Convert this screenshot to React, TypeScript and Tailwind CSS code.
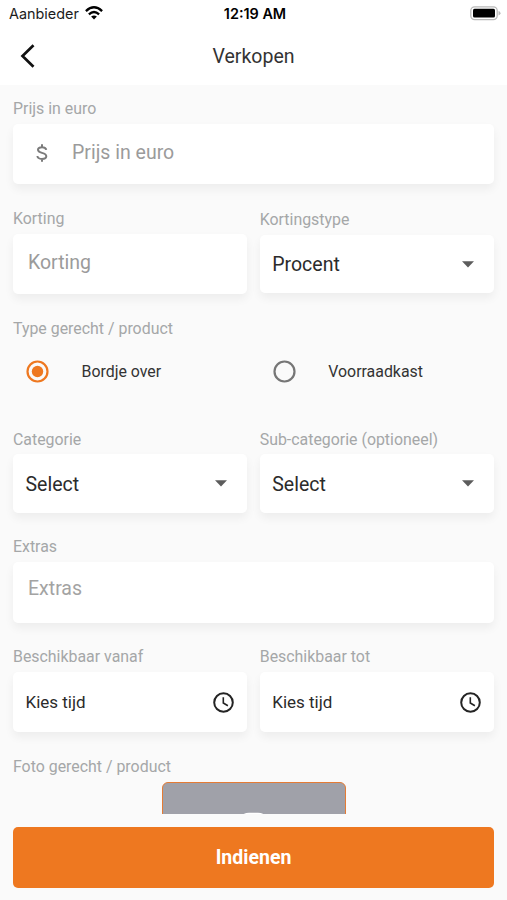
import type { ReactNode } from 'react';

const card = 'rounded-[5px] bg-white shadow-[0_5px_10px_rgba(0,0,0,0.055)]';

function Label({ children, className = '' }: { children: ReactNode; className?: string }) {
  return (
    <div className={`h-5 whitespace-nowrap text-[15.9px] leading-[22px] text-[#a5a7a8] ${className}`}>{children}</div>
  );
}

function Caret() {
  return (
    <svg width="12" height="7" viewBox="0 0 12 7" fill="#5c5c5c">
      <path d="M0 0.3H12L6 6.5Z" />
    </svg>
  );
}

function Select({ label, value, className, boxClass }: { label: string; value: string; className: string; boxClass: string }) {
  return (
    <div className={`flex-1 ${className}`}>
      <Label>{label}</Label>
      <div className={`flex items-center justify-between pr-[20.5px] pl-[12.5px] text-[19.5px] text-[#2b2b2b] ${card} ${boxClass}`}>
        <span className="pt-0.5">{value}</span>
        <Caret />
      </div>
    </div>
  );
}

function TimeField({ label }: { label: string }) {
  return (
    <div className="flex-1">
      <Label>{label}</Label>
      <div className={`mt-1.5 flex h-[60px] items-center justify-between pr-[13.5px] pl-[12.5px] text-[17px] text-[#2b2b2b] ${card}`}>
        <span className="pt-0.5">Kies tijd</span>
        <svg width="21" height="21" viewBox="0 0 21 21" fill="none" stroke="#242424">
          <circle cx="10.5" cy="10.5" r="9.3" strokeWidth="2" />
          <path d="M10.3 5.2V11L14.9 13.7" strokeWidth="1.6" />
        </svg>
      </div>
    </div>
  );
}

function Radio({ label, checked = false }: { label: string; checked?: boolean }) {
  return (
    <div className="flex flex-1 items-center pl-[13px]">
      <svg width="23" height="23" viewBox="0 0 23 23" fill="none" stroke={checked ? '#ee7820' : '#767676'}>
        <circle cx="11.5" cy="11.5" r="10" strokeWidth="2.2" />
        {checked && <circle cx="11.5" cy="11.5" r="5.7" fill="#ee7820" stroke="none" />}
      </svg>
      <span className="ml-[32.5px] pt-0.5 text-[15.9px] text-[#333]">{label}</span>
    </div>
  );
}

export default function App() {
  return (
    <div className="flex h-[900px] w-[507px] flex-col overflow-hidden bg-[#fafafa] font-[Roboto,sans-serif]">
      <header className="h-[85px] bg-white">
        <div className="grid h-7 grid-cols-3 items-center pr-[6px] pl-[9px] font-[Inter,sans-serif] text-[14.4px] text-[#1c1c1c]">
          <div className="flex items-center gap-1.5">
            <span>Aanbieder</span>
            <svg className="mb-0.5" width="18" height="14" viewBox="0 0 18 14" fill="none" stroke="#000" strokeWidth="2.3">
              <path d="M0.9 5.1Q9 -2.5 17.1 5.1" />
              <path d="M3.9 8.3Q9 3.6 14.1 8.3" />
              <path d="M9 13.6L6.1 10.6Q9 8.2 11.9 10.6Z" fill="#000" stroke="none" />
            </svg>
          </div>
          <div className="text-center font-semibold whitespace-nowrap text-black">12:19 AM</div>
          <svg className="mb-0.5 justify-self-end" width="31" height="15" viewBox="0 0 31 15">
            <rect x="0.8" y="0.8" width="26.4" height="12.8" rx="3.8" fill="#fff" stroke="#b9b9b9" strokeWidth="1.3" />
            <rect x="3" y="2.8" width="22" height="8.8" rx="1.5" />
            <path d="M28.5 5Q30.5 5.6 30.5 7.2T28.5 9.5Z" fill="#b9b9b9" />
          </svg>
        </div>
        <div className="grid h-14 grid-cols-3 items-center px-5">
          <svg width="15" height="24" viewBox="0 0 15 24" fill="none" stroke="#111" strokeWidth="2.7">
            <path d="M13.5 1.2L2.5 12L13.5 22.8" />
          </svg>
          <h1 className="pt-0.5 text-center text-[19.5px] text-[#333]">Verkopen</h1>
        </div>
      </header>

      <main className="h-[729px] overflow-hidden px-[13px] pt-[13px]">
        <Label>Prijs in euro</Label>
        <div className={`mt-1.5 flex h-[60px] items-center pb-[2px] text-[19.5px] text-[#9b9b9b] ${card}`}>
          <svg className="ml-[23px]" width="12" height="20" viewBox="0 0 12 20" fill="none" stroke="#7b7b7b" strokeWidth="2">
            <path d="M10.2 6.9C10 5.1 8.5 4.2 6 4.2C3.4 4.2 2 5.3 2 6.8C2 8.7 3.6 9.3 6 9.9C8.8 10.6 10.3 11.4 10.3 13.3C10.3 15 8.5 15.9 6 15.9C3.3 15.9 1.6 14.9 1.4 13M6 1.2V4M6 16V18.8" />
          </svg>
          <span className="ml-6">Prijs in euro</span>
        </div>

        <div className="mt-6 flex gap-[12.5px]">
          <div className="flex-1">
            <Label>Korting</Label>
            <div className={`mt-1.5 flex h-[60px] items-center pb-[2px] pl-[15px] text-[19.5px] text-[#9b9b9b] ${card}`}>Korting</div>
          </div>
          <Select label="Kortingstype" value="Procent" className="pt-px" boxClass="mt-1.5 h-[58px]" />
        </div>

        <Label className="mt-6">Type gerecht / product</Label>
        <div className="flex h-[66px] gap-[12.5px]">
          <Radio label="Bordje over" checked />
          <Radio label="Voorraadkast" />
        </div>

        <div className="mt-[25px] flex gap-[12.5px]">
          <Select label="Categorie" value="Select" className="" boxClass="mt-[5px] h-[59px]" />
          <Select label="Sub-categorie (optioneel)" value="Select" className="" boxClass="mt-[5px] h-[59px]" />
        </div>

        <Label className="mt-[23px]">Extras</Label>
        <div className={`mt-1.5 flex h-[61px] items-center pb-[7px] pl-[15px] text-[19.5px] text-[#a3a3a3] ${card}`}>Extras</div>

        <div className="mt-[23px] flex gap-[12.5px]">
          <TimeField label="Beschikbaar vanaf" />
          <TimeField label="Beschikbaar tot" />
        </div>

        <Label className="mt-6">Foto gerecht / product</Label>
        <div className="mx-auto mt-1.5 h-[120px] w-[184px] rounded-[6px] border border-[#e47b35] bg-[#a0a1a9] pt-[29px]">
          <svg className="mx-auto" width="60" height="52" viewBox="0 0 60 52" fill="#fff">
            <path d="M18 3Q21 0.8 25 0.8H34Q38 0.8 41 3L46 8H56Q60 8 60 12V48Q60 52 56 52H4Q0 52 0 48V12Q0 8 4 8H14Z" />
          </svg>
        </div>
      </main>

      <footer className="px-[13px] pt-[13px]">
        <button className="h-[60.5px] w-full rounded-[5px] bg-[#ee7820] pt-px text-[19.5px] font-bold text-white">Indienen</button>
      </footer>
    </div>
  );
}
